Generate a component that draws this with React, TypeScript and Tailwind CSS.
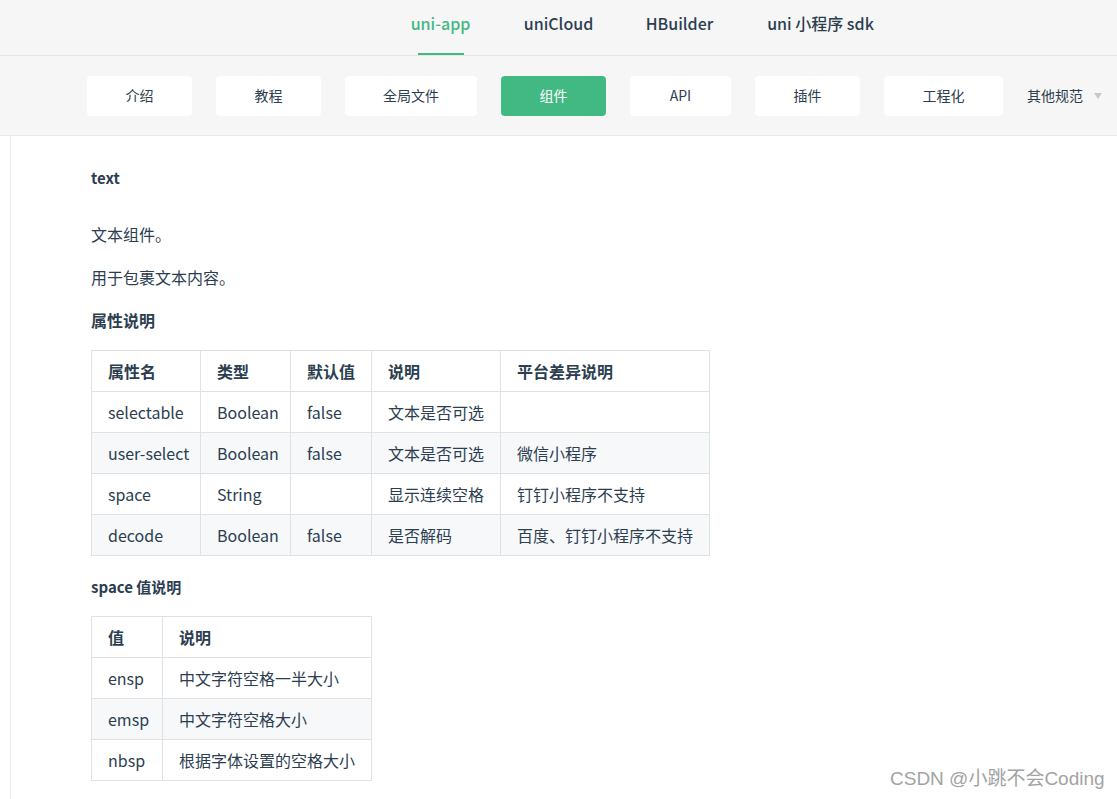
import React from "react";

const font = { fontFamily: '"Noto Sans CJK SC", "Noto Sans", sans-serif' };

const navItems: { label: string; w: string }[] = [
  { label: "uni-app", w: "w-[57px]" },
  { label: "uniCloud", w: "w-[65px]" },
  { label: "HBuilder", w: "w-[63px]" },
  { label: "uni 小程序 sdk", w: "w-[105px]" },
];
const buttons: { label: string; w: string; active?: boolean }[] = [
  { label: "介绍", w: "w-[105px]" },
  { label: "教程", w: "w-[105px]" },
  { label: "全局文件", w: "w-[132px]" },
  { label: "组件", w: "w-[105px]", active: true },
  { label: "API", w: "w-[101px]" },
  { label: "插件", w: "w-[105px]" },
  { label: "工程化", w: "w-[119px]" },
];

const rows1 = [
  ["selectable", "Boolean", "false", "文本是否可选", ""],
  ["user-select", "Boolean", "false", "文本是否可选", "微信小程序"],
  ["space", "String", "", "显示连续空格", "钉钉小程序不支持"],
  ["decode", "Boolean", "false", "是否解码", "百度、钉钉小程序不支持"],
];
const rows2 = [
  ["ensp", "中文字符空格一半大小"],
  ["emsp", "中文字符空格大小"],
  ["nbsp", "根据字体设置的空格大小"],
];

function Table({
  head,
  rows,
  widths,
  tw,
}: {
  head: string[];
  rows: string[][];
  widths: string[];
  tw: string;
}) {
  return (
    <table className={`table-fixed border-collapse text-[16px] text-[#2c3e50] ${tw}`}>
      <colgroup>
        {widths.map((w, i) => (
          <col key={i} className={w} />
        ))}
      </colgroup>
      <thead>
        <tr>
          {head.map((h, i) => (
            <th
              key={i}
              className="overflow-hidden border border-[#dfe2e5] px-4 py-2 text-left font-semibold leading-6 whitespace-nowrap"
            >
              {h}
            </th>
          ))}
        </tr>
      </thead>
      <tbody>
        {rows.map((r, ri) => (
          <tr key={ri} className={ri % 2 === 1 ? "bg-[#f6f8fa]" : "bg-white"}>
            {r.map((c, ci) => (
              <td
                key={ci}
                className="overflow-hidden border border-[#dfe2e5] px-4 py-2 leading-6 whitespace-nowrap"
              >
                {c}
              </td>
            ))}
          </tr>
        ))}
      </tbody>
    </table>
  );
}

export default function App() {
  return (
    <div className="relative min-h-[799px] bg-white text-[#2c3e50]" style={font}>
      {/* Top nav */}
      <div className="flex h-[56px] items-stretch gap-[57px] border-b border-[#e6e6e6] bg-[#f6f6f6] pl-[412px]">
        {navItems.map((n, i) => (
          <div
            key={n.label}
            className={`relative flex ${n.w} items-center justify-center pb-[9px] text-[16px] font-medium leading-6 whitespace-nowrap`}
          >
            <span className={i === 0 ? "text-[#42b983]" : "text-[#2c3e50]"}>{n.label}</span>
            {i === 0 && (
              <div className="absolute bottom-0 left-1/2 h-[2px] w-[46px] -translate-x-1/2 bg-[#42b983]" />
            )}
          </div>
        ))}
      </div>

      {/* Sub nav */}
      <div className="flex h-[80px] items-center border-b border-[#e9e9e9] bg-[#f6f6f6] pl-[87px]">
        <div className="flex items-center gap-6">
          {buttons.map((b) => (
            <div
              key={b.label}
              className={`flex h-[40px] ${b.w} items-center justify-center rounded-[4px] text-[14px] ${
                b.active ? "bg-[#42b983] text-white" : "bg-white text-[#2c3e50]"
              }`}
            >
              {b.label}
            </div>
          ))}
          <div className="flex items-center gap-[11px] text-[14px] text-[#2c3e50]">
            <span>其他规范</span>
            <svg width="8" height="6" viewBox="0 0 8 6">
              <path d="M0 0 L8 0 L4 6 Z" fill="#c8c8c8" />
            </svg>
          </div>
        </div>
      </div>

      {/* Content */}
      <div className="flex">
        <div className="ml-[10px] w-px self-stretch bg-[#ececec]" />
        <div className="pl-[80px] pt-[30px] pb-[20px]">
          <div className="text-[15px] font-semibold leading-6">text</div>
          <p className="mt-[32px] text-[16px] leading-6">文本组件。</p>
          <p className="mt-[19px] text-[16px] leading-6">用于包裹文本内容。</p>
          <div className="mt-[19px] text-[16px] font-semibold leading-6">属性说明</div>
          <div className="mt-[18px]">
            <Table
              head={["属性名", "类型", "默认值", "说明", "平台差异说明"]}
              rows={rows1}
              widths={["w-[109px]", "w-[90px]", "w-[81px]", "w-[129px]", "w-[209px]"]}
              tw="w-[619px]"
            />
          </div>
          <div className="mt-[19px] text-[15px] font-semibold leading-6">space 值说明</div>
          <div className="mt-[17px]">
            <Table
              head={["值", "说明"]}
              rows={rows2}
              widths={["w-[71px]", "w-[209px]"]}
              tw="w-[281px]"
            />
          </div>
        </div>
      </div>

      <div
        className="absolute left-[890px] top-[766px] text-[19px] leading-[26px] text-[#a3a3a3]"
        style={{ fontFamily: '"Liberation Sans", "Noto Sans CJK SC", sans-serif' }}
      >
        CSDN @小跳不会Coding
      </div>
    </div>
  );
}
